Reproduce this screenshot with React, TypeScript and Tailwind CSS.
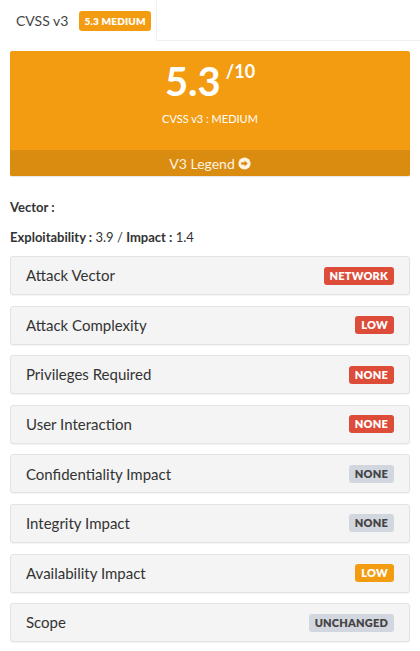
import { ReactNode } from "react";

type Tone = "red" | "gray" | "orange";

const metrics: { label: string; value: string; tone: Tone }[] = [
  { label: "Attack Vector", value: "NETWORK", tone: "red" },
  { label: "Attack Complexity", value: "LOW", tone: "red" },
  { label: "Privileges Required", value: "NONE", tone: "red" },
  { label: "User Interaction", value: "NONE", tone: "red" },
  { label: "Confidentiality Impact", value: "NONE", tone: "gray" },
  { label: "Integrity Impact", value: "NONE", tone: "gray" },
  { label: "Availability Impact", value: "LOW", tone: "orange" },
  { label: "Scope", value: "UNCHANGED", tone: "gray" },
];

const toneClass: Record<Tone, string> = {
  red: "bg-[#dd4b39] text-white",
  gray: "bg-[#d2d6de] text-[#444]",
  orange: "bg-[#f39c12] text-white",
};

function Badge({ tone, children }: { tone: Tone; children: ReactNode }) {
  return (
    <span
      className={`inline-block whitespace-nowrap rounded-[3px] px-[6px] py-[2px] text-[11px] font-extrabold leading-[14px] tracking-[0.2px] ${toneClass[tone]}`}
    >
      {children}
    </span>
  );
}

export default function App() {
  return (
    <div className="min-h-[651px] bg-white font-['Lato','Noto_Sans',sans-serif] text-[#333]">
      {/* tabs */}
      <div className="flex h-[41px]">
        <div className="flex w-[157px] shrink-0 items-center whitespace-nowrap border-r border-[#f0f0f0] pl-[16px]">
          <span className="text-[14px] text-[#444]">CVSS v3</span>
          <span className="ml-[11px] rounded-[3px] bg-[#f39c12] px-[5px] py-[4px] text-[10px] font-extrabold leading-[12px] tracking-[0.2px] text-white">
            5.3 MEDIUM
          </span>
        </div>
        <div className="flex-1 border-b border-[#f0f0f0]" />
      </div>

      <div className="px-[10px] pt-[10px]">
        {/* score box */}
        <div className="overflow-hidden rounded-[2px] bg-[#f39c12] text-white shadow-[0_1px_1px_rgba(0,0,0,0.1)]">
          <div className="flex h-[99px] flex-col items-center pt-[7px]">
            <div className="flex items-start">
              <span className="text-[40px] font-bold leading-[46px]">5.3</span>
              <span className="ml-[5px] mt-[3px] text-[18px] font-bold leading-[20px]">/10</span>
            </div>
            <div className="mt-[8px] text-[11px] leading-[14px]">CVSS v3 : MEDIUM</div>
          </div>
          <div className="flex h-[26px] items-center justify-center gap-[3px] bg-[#da8c10] text-[14px] text-[#fdf3e2]">
            <span>V3 Legend</span>
            <svg width="13" height="13" viewBox="0 0 16 16">
              <circle cx="8" cy="8" r="7.5" fill="#fdf3e2" />
              <path d="M4 6.6h4.2V4.2L12 8l-3.8 3.8V9.4H4z" fill="#da8c10" />
            </svg>
          </div>
        </div>

        {/* vector */}
        <div className="mt-[23px] text-[13px] font-bold leading-[16px]">Vector :</div>
        <div className="mt-[14px] text-[13px] leading-[16px]">
          <b>Exploitability :</b> 3.9 / <b>Impact :</b> 1.4
        </div>

        {/* metrics */}
        <div className="mt-[11px] flex flex-col gap-[10.6px]">
          {metrics.map((m) => (
            <div
              key={m.label}
              className="flex h-[39px] items-center justify-between rounded-[3px] border border-[#e3e3e3] bg-[#f4f4f4] px-[15px] shadow-[0_1px_1px_rgba(0,0,0,0.05)]"
            >
              <span className="text-[15px] text-[#333]">{m.label}</span>
              <Badge tone={m.tone}>{m.value}</Badge>
            </div>
          ))}
        </div>
      </div>
    </div>
  );
}
